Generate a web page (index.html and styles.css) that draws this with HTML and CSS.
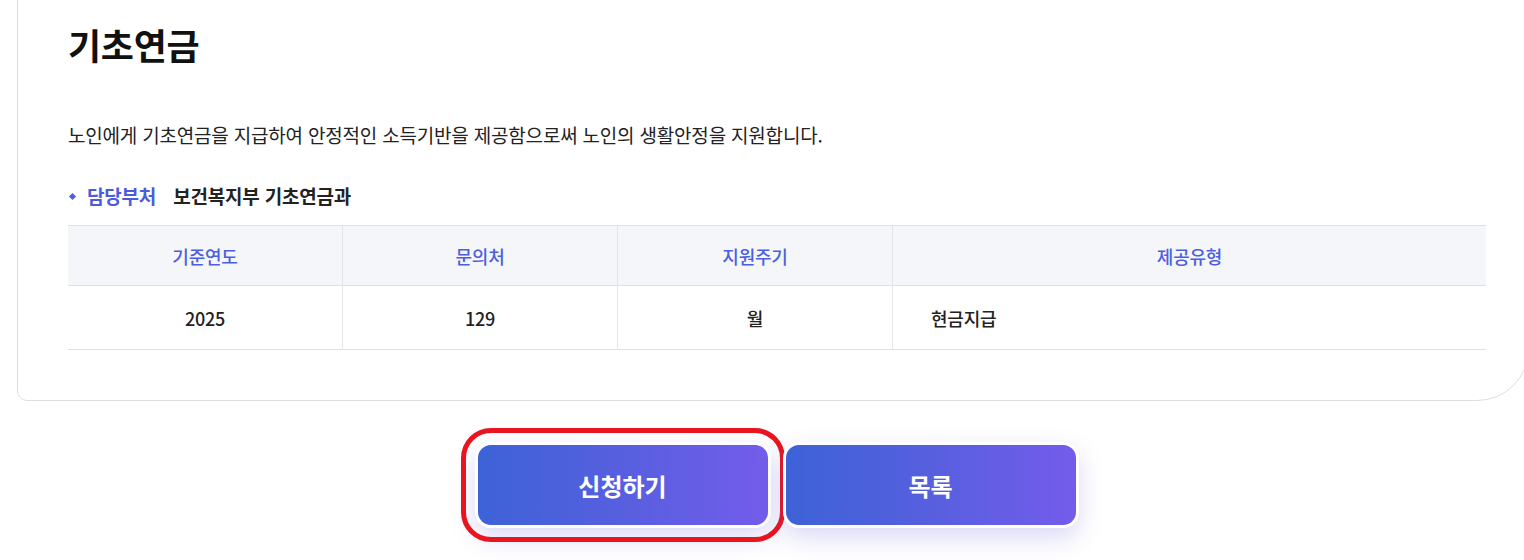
FILE: index.html
```html
<!DOCTYPE html>
<html lang="ko">
<head>
<meta charset="utf-8">
<title>기초연금</title>
<link rel="stylesheet" href="styles.css">
</head>
<body>
<div class="page">
  <section class="card">
    <h1 class="title">기초연금</h1>
    <p class="desc">노인에게 기초연금을 지급하여 안정적인 소득기반을 제공함으로써 노인의 생활안정을 지원합니다.</p>
    <div class="dept">
      <span class="bullet"></span>
      <span class="dept-label">담당부처</span>
      <span class="dept-value">보건복지부 기초연금과</span>
    </div>
    <table class="info">
      <thead>
        <tr>
          <th class="c1">기준연도</th>
          <th class="c2">문의처</th>
          <th class="c3">지원주기</th>
          <th class="c4">제공유형</th>
        </tr>
      </thead>
      <tbody>
        <tr>
          <td class="center">2025</td>
          <td class="center">129</td>
          <td class="center">월</td>
          <td class="left">현금지급</td>
        </tr>
      </tbody>
    </table>
  </section>
  <div class="actions">
    <button class="btn focused" type="button">신청하기</button>
    <button class="btn" type="button">목록</button>
  </div>
</div>
</body>
</html>
```

FILE: styles.css
```css
html, body {
  margin: 0;
  padding: 0;
  overflow: hidden;
  background: #ffffff;
}
body {
  font-family: "Noto Sans CJK KR", "Noto Sans", sans-serif;
  color: #222222;
  width: 1524px;
  height: 560px;
}
.page {
  width: 1524px;
}
.card {
  box-sizing: border-box;
  width: 1512px;
  margin: -20px 0 0 17px;
  padding: 43px 0 50px 50px;
  border: 1px solid #dedede;
  border-radius: 10px 10px 52px 10px;
  background: #fff;
}
.title {
  margin: 0;
  font-size: 36px;
  line-height: 40px;
  font-weight: 700;
  letter-spacing: -0.3px;
  color: #111;
}
.desc {
  margin: 58px 0 0;
  font-size: 19px;
  line-height: 26px;
  letter-spacing: -0.2px;
  color: #222;
}
.dept {
  margin-top: 35px;
  display: flex;
  align-items: center;
  font-size: 19px;
  line-height: 26px;
  letter-spacing: -0.2px;
}
.bullet {
  width: 5px;
  height: 5px;
  background: #4b5fe0;
  transform: rotate(45deg);
  margin: 0 12px 0 2px;
}
.dept-label {
  color: #4b5bdc;
  font-weight: 700;
  margin-right: 17px;
}
.dept-value {
  color: #222;
  font-weight: 700;
}
.info {
  margin-top: 16px;
  width: 1415px;
  border-collapse: collapse;
  table-layout: fixed;
  font-size: 18px;
  letter-spacing: -0.2px;
}
.info .c1 { width: 274px; }
.info .c2 { width: 274px; }
.info .c3 { width: 274px; }
.info .c4 { width: 593px; }
.info th {
  height: 59px;
  padding: 0;
  background: #f5f6fa;
  color: #4b5fe0;
  font-weight: 500;
  border-top: 1px solid #dfe0e5;
  border-bottom: 1px solid #dfe0e5;
  border-left: 1px solid #e3e3e8;
  text-align: center;
}
.info td {
  height: 63px;
  padding: 0;
  font-weight: 500;
  color: #222;
  border-bottom: 1px solid #dfe0e5;
  border-left: 1px solid #e6e6ea;
}
.info th:first-child,
.info td:first-child {
  border-left: none;
}
.info td.center { text-align: center; }
.info td.left { text-align: left; padding-left: 38px; }
.actions {
  display: flex;
  justify-content: center;
  gap: 12px;
  width: 1524px;
  padding-left: 29px;
  box-sizing: border-box;
  margin-top: 41px;
}
.btn {
  box-sizing: border-box;
  width: 296px;
  height: 86px;
  border: 3px solid #ffffff;
  border-radius: 16px;
  background: linear-gradient(90deg, #3d62d8 0%, #5a5fe0 55%, #745ceb 100%);
  color: #ffffff;
  font-family: "Noto Sans CJK KR", "Noto Sans", sans-serif;
  font-size: 24px;
  font-weight: 700;
  letter-spacing: 0;
  box-shadow: 0 10px 24px rgba(90, 86, 210, 0.22);
  cursor: pointer;
}
.btn.focused {
  outline: 5px solid #e8141f;
  outline-offset: 9px;
}
```
